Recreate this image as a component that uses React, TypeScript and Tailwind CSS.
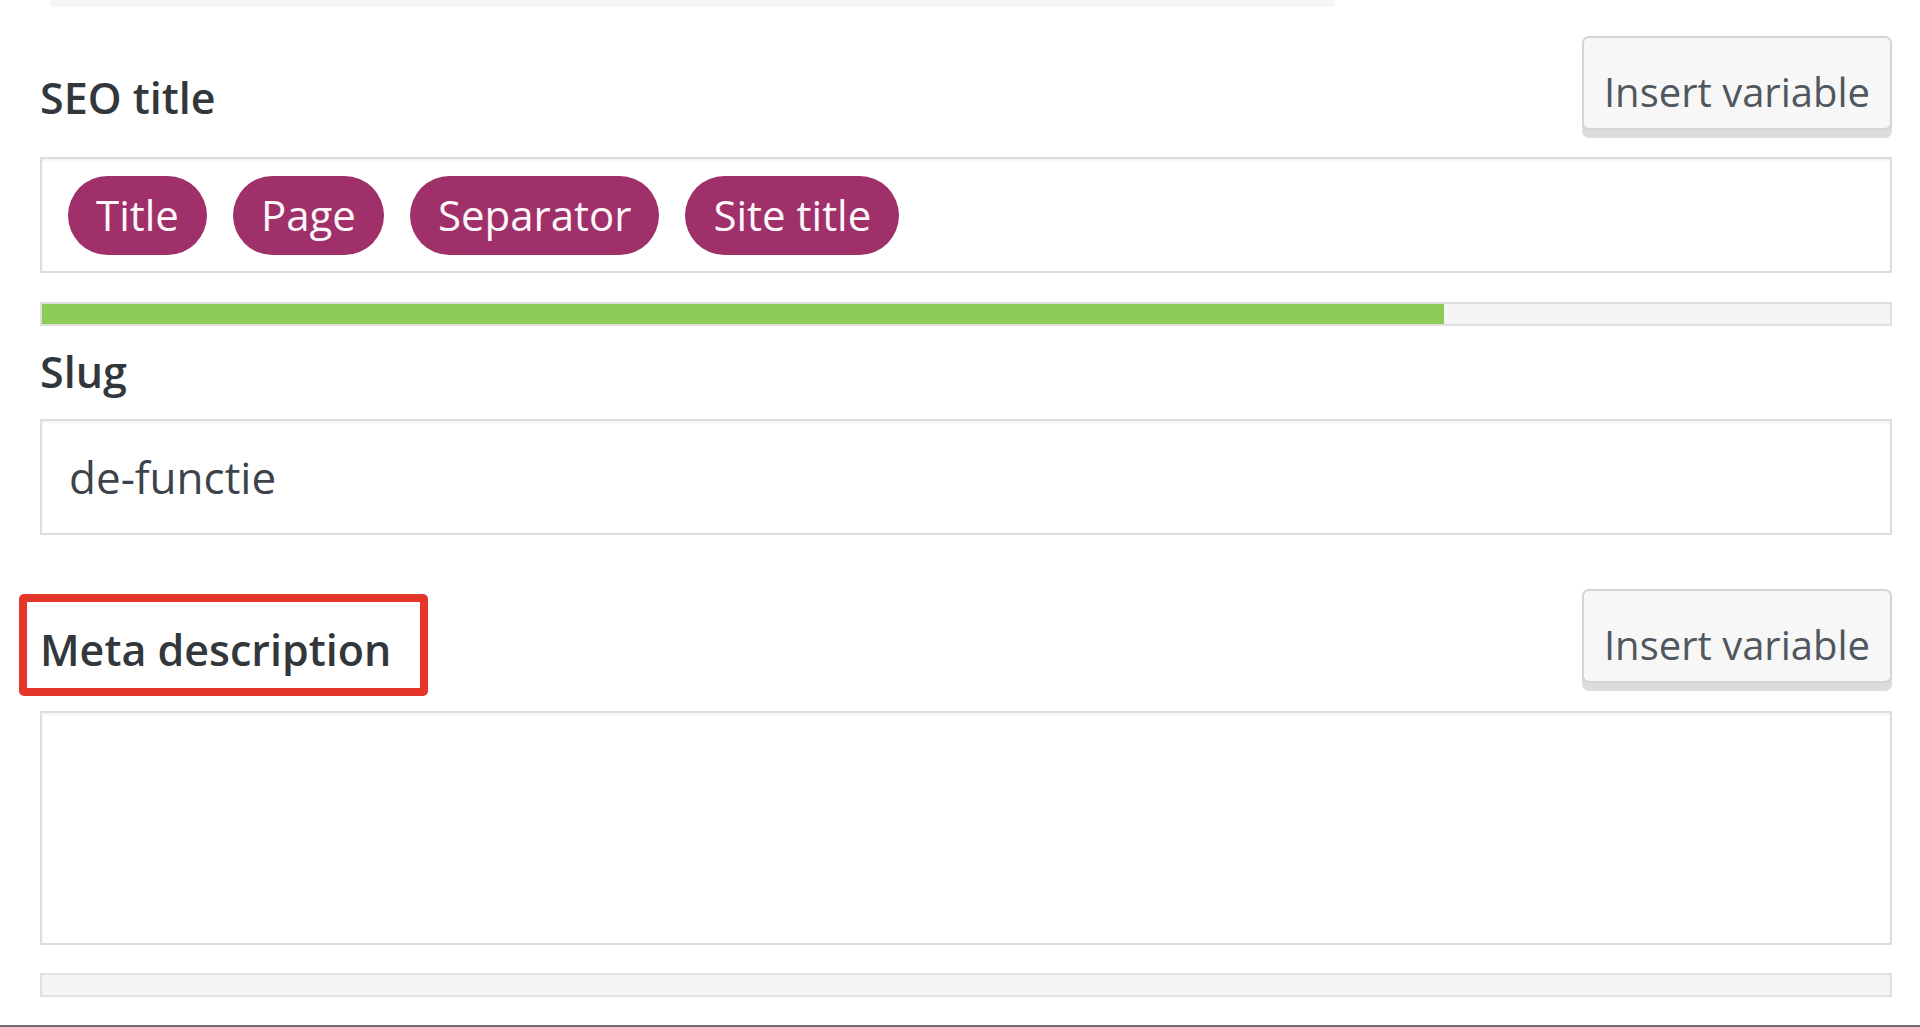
import React from "react";

const font = { fontFamily: '"Open Sans", "Noto Sans", sans-serif' };

function InsertButton() {
  return (
    <button
      type="button"
      className="h-[94px] w-[310px] shrink-0 rounded-[7px] border-2 border-[#d4d4d4] bg-[#f7f7f7] pt-[17px] text-[40px] leading-none text-[#50575e] shadow-[0_8px_0_#dcdcdc]"
    >
      Insert variable
    </button>
  );
}

function Pill({ label }: { label: string }) {
  return (
    <span className="flex h-[79px] items-center rounded-full bg-[#9f306a] px-[28px] text-[42px] leading-none text-[#fdf7fa]">
      {label}
    </span>
  );
}

function Progress({ fill }: { fill: string }) {
  return (
    <div className="h-[24px] w-full border-2 border-[#e0e0e0] bg-[#f5f5f5]">
      <div className={`h-full bg-[#8ccb55] ${fill}`} />
    </div>
  );
}

export default function App() {
  return (
    <div className="flex h-[1027px] w-full flex-col overflow-hidden bg-white" style={font}>
      <div className="flex flex-1 flex-col pl-[40px] pr-[28px]">
        {/* bottom edge of the snippet preview above */}
        <div className="ml-[10px] h-[7px] w-[1285px] bg-[#f6f6f8]" />

        {/* SEO title */}
        <div className="mt-[29px] flex h-[94px] items-end justify-between">
          <label className="mb-[11px] text-[43px] font-semibold leading-[43px] text-[#32373c]">SEO title</label>
          <InsertButton />
        </div>
        <div className="mt-[27px] flex h-[116px] items-center gap-[26px] border-2 border-[#dddddd] bg-white pl-[26px] shadow-[inset_0_2px_3px_rgba(0,0,0,0.05)]">
          <Pill label="Title" />
          <Pill label="Page" />
          <Pill label="Separator" />
          <Pill label="Site title" />
        </div>
        <div className="mt-[29px]">
          <Progress fill="w-[1402px]" />
        </div>

        {/* Slug */}
        <label className="mt-[24px] text-[43px] font-semibold leading-[43px] text-[#32373c]">Slug</label>
        <div className="mt-[26px] flex h-[116px] items-center border-2 border-[#dddddd] bg-white pl-[27px] text-[44px] leading-none text-[#3c434a] shadow-[inset_0_2px_3px_rgba(0,0,0,0.05)]">
          de-functie
        </div>

        {/* Meta description */}
        <div className="mt-[54px] flex h-[94px] items-end justify-between">
          <div className="relative mb-[11px]">
            <label className="text-[43px] font-semibold leading-[43px] text-[#32373c]">Meta description</label>
            <div className="absolute left-[-21px] top-[-34px] h-[102px] w-[409px] rounded-[5px] border-[8px] border-[#e5362a]" />
          </div>
          <InsertButton />
        </div>
        <div className="mt-[28px] h-[234px] border-2 border-[#dddddd] bg-white shadow-[inset_0_2px_3px_rgba(0,0,0,0.05)]" />
        <div className="mt-[28px]">
          <Progress fill="w-0" />
        </div>
      </div>
      <div className="h-[2px] w-full bg-[#6e6e6e]" />
    </div>
  );
}
